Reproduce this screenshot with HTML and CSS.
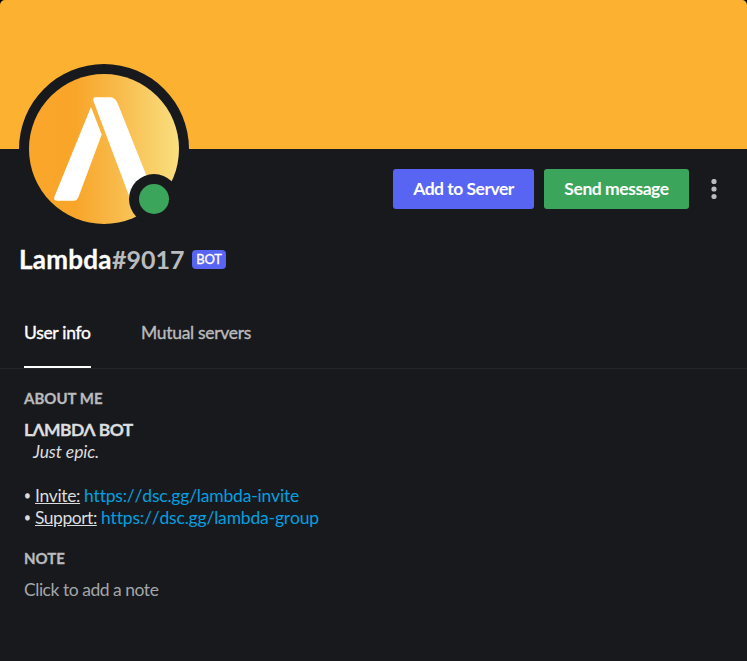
FILE: index.html
```html
<!DOCTYPE html>
<html lang="en">
<head>
<meta charset="utf-8">
<title>Lambda</title>
<link rel="stylesheet" href="styles.css">
</head>
<body>
<main class="profile">
  <div class="banner"></div>
  <header class="header">
    <div class="avatar">
      <svg width="170" height="170" viewBox="0 0 170 170" role="img" aria-label="Lambda avatar">
        <defs>
          <linearGradient id="gold" x1="0" x2="1" y1="0" y2="0">
            <stop offset="0" stop-color="#f9a62a"/>
            <stop offset=".3" stop-color="#f8a529"/>
            <stop offset=".6" stop-color="#f8bb4b"/>
            <stop offset="1" stop-color="#f9df7f"/>
          </linearGradient>
          <clipPath id="disc"><circle cx="85" cy="85" r="75"/></clipPath>
        </defs>
        <circle cx="85" cy="85" r="85" fill="#18191c"/>
        <g clip-path="url(#disc)">
          <rect x="10" y="10" width="150" height="150" fill="url(#gold)"/>
          <path d="M72 43 L82.700 70.500 L59.500 133 Q58 136.700 55 136.700 H38.500 Q34 136.700 35.500 132.500 Z" fill="#fff"/>
          <path d="M76.500 33.300 H91 Q96 33.300 98.500 39 L128 113 L112 137 L74.800 38 Q73 33.300 76.500 33.300Z" fill="#fff"/>
        </g>
        <circle cx="135" cy="135" r="25" fill="#18191c"/>
        <circle cx="135" cy="135" r="15" fill="#3ba55c"/>
      </svg>
    </div>
    <div class="actions">
      <button class="button add">Add to Server</button>
      <button class="button send">Send message</button>
      <button class="more" aria-label="More">
        <svg width="6" height="20" viewBox="0 0 6 20" fill="#b9bbbe"><circle cx="3" cy="2.500" r="2.600"/><circle cx="3" cy="10" r="2.600"/><circle cx="3" cy="17.500" r="2.600"/></svg>
      </button>
    </div>
  </header>
  <h1 class="username"><span class="name">Lambda</span><span class="tag">#9017</span><span class="badge">BOT</span></h1>
  <nav class="tabs">
    <a class="tab active">User info</a>
    <a class="tab mutual">Mutual servers</a>
  </nav>
  <section class="info">
    <h2 class="heading about">ABOUT ME</h2>
    <div class="bio">
      <p class="line bot">LΛMBDΛ BOT</p>
      <p class="line epic">Just epic.</p>
      <p class="line gap"></p>
      <p class="line"><span class="bullet">•</span><u class="invite">Invite:</u><a class="link link-invite">https://dsc.gg/lambda-invite</a></p>
      <p class="line"><span class="bullet">•</span><u class="support">Support:</u><a class="link link-group">https://dsc.gg/lambda-group</a></p>
    </div>
    <h2 class="heading note">NOTE</h2>
    <p class="note-text">Click to add a note</p>
  </section>
</main>
</body>
</html>
```
FILE: styles.css
```css
* { box-sizing: border-box; margin: 0; padding: 0; }
body { background: #000; font-family: Lato, "Open Sans", sans-serif; color: #dcddde; }
.profile { width: 747px; height: 661px; overflow: hidden; border-radius: 5px 5px 0 0; background: #18191c; }
.banner { height: 149px; background: #fcb131; }
.header { height: 95px; display: flex; justify-content: space-between; padding: 0 30px 0 19px; }
.avatar { margin-top: -85px; height: 170px; }
.avatar svg { display: block; }
.actions { display: flex; gap: 10px; padding-top: 20px; }
.button { height: 40px; padding-bottom: 1px; border: 0; border-radius: 3px; color: #fff; font: 700 17.500px Lato, sans-serif; white-space: nowrap; }
.add { width: 141px; background: #5865f2; letter-spacing: -.5px; }
.send { width: 145px; background: #3ba55c; letter-spacing: -.45px; }
.more { width: 6px; height: 40px; margin-left: 12px; border: 0; background: none; display: flex; align-items: center; }
.username { display: flex; align-items: center; height: 30px; padding-left: 19px; font-size: 25px; line-height: 30px; white-space: nowrap; }
.name, .tag { height: 31px; }
.name { width: 93px; color: #fff; font-size: 26px; letter-spacing: .25px; -webkit-text-stroke: .3px; }
.tag { width: 80px; color: #b9bbbe; }
.badge { width: 34px; height: 19px; border-radius: 4px; background: #5865f2; color: #fff; font-size: 13px; font-weight: 400; line-height: 18.500px; text-align: center; letter-spacing: -.2px; -webkit-text-stroke: .35px; }
.tabs { display: flex; gap: 50px; height: 95px; padding: 40px 24px 0; border-bottom: 1px solid #25262a; }
.tab { height: 54px; line-height: 38px; font-size: 17.500px; color: #b9bbbe; white-space: nowrap; letter-spacing: -.3px; -webkit-text-stroke: .35px; }
.active { width: 67px; color: #fff; border-bottom: 2px solid #fff; }
.info { padding: 19px 24px 0; }
.heading { font-size: 15px; line-height: 20px; color: #b9bbbe; -webkit-text-stroke: .3px; }
.bio { padding-top: 11px; }
.line { display: flex; height: 22px; line-height: 22px; font-size: 17.500px; white-space: nowrap; }
.bot { font-weight: 700; letter-spacing: -.6px; -webkit-text-stroke: .3px; }
.epic { padding-left: 9px; font-style: italic; letter-spacing: -.1px; }
.bullet { width: 11px; font-family: "Open Sans", sans-serif; font-size: 18px; -webkit-text-stroke: .8px; }
.invite { width: 45px; margin-right: 4px; letter-spacing: -.33px; }
.support { width: 62px; margin-right: 4px; letter-spacing: -.48px; }
.link { color: #00a0e0; font-kerning: none; font-variant-ligatures: none; }
.link-invite { letter-spacing: -.2px; }
.link-group { letter-spacing: -.18px; }
.note { margin-top: 19px; }
.note-text { margin-top: 11px; font-size: 17.500px; line-height: 22px; color: #a3a6aa; letter-spacing: -.47px; }
```
